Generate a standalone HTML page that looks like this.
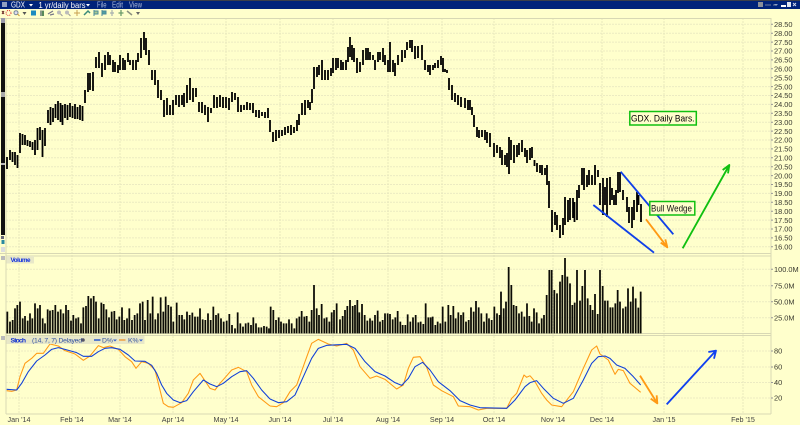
<!DOCTYPE html>
<html><head><meta charset="utf-8"><title>GDX</title>
<style>
html,body{margin:0;padding:0;background:#ffffcc;width:800px;height:425px;overflow:hidden}
svg{display:block;font-family:"Liberation Sans",sans-serif;filter:blur(.25px)}
</style></head><body>
<svg width="800" height="425" viewBox="0 0 800 425" xmlns="http://www.w3.org/2000/svg">
<rect width="800" height="425" fill="#ffffcc"/>
<!-- title bar -->
<rect width="800" height="9" fill="#00237a"/>
<rect width="800" height="1" fill="#3a3f4a"/>
<rect x="2" y="2" width="5" height="5" fill="#8fa0c0"/>
<text x="11" y="7.500" font-size="8" fill="#fff" textLength="14" lengthAdjust="spacingAndGlyphs">GDX</text>
<path d="M29 4h4l-2 2.500z" fill="#fff"/>
<text x="38.500" y="7.800" font-size="8.500" fill="#fff" textLength="47" lengthAdjust="spacingAndGlyphs">1 yr/daily bars</text>
<path d="M86 4h4l-2 2.500z" fill="#fff"/>
<text x="97" y="7.500" font-size="8" fill="#a9b8d8" textLength="9.500" lengthAdjust="spacingAndGlyphs">File</text>
<text x="112" y="7.500" font-size="8" fill="#a9b8d8" textLength="11" lengthAdjust="spacingAndGlyphs">Edit</text>
<text x="129" y="7.500" font-size="8" fill="#a9b8d8" textLength="13" lengthAdjust="spacingAndGlyphs">View</text>
<rect x="758" y="2" width="5" height="5" fill="#8a8f99"/><path d="M765 5h6M773 5h2" stroke="#6f7f9f" stroke-width="1"/>
<path d="M774 4h4l-2 2z" fill="#8fa0c0"/>
<rect x="781" y="5" width="5" height="2" fill="#fff"/><rect x="787" y="2" width="4" height="5" fill="#dfe6f2"/>
<path d="M793 3l3 3M796 3l-3 3" stroke="#cfd8ea" stroke-width="1"/>
<!-- toolbar -->
<g>
<path d="M2 11l2 3M4 11l-2 3" stroke="#622" stroke-width="1"/>
<circle cx="8.500" cy="13" r="2.500" fill="none" stroke="#d33" stroke-width="1" stroke-dasharray="1 1"/>
<circle cx="16" cy="12.700" r="2" fill="#dde" stroke="#789"/><path d="M17.500 14l2 2" stroke="#c93"/>
<path d="M22.500 12h4l-2 3z" fill="#555"/>
<rect x="31" y="10.500" width="5" height="5" fill="#1c8cc0"/>
<rect x="40" y="10.500" width="4" height="5.500" fill="#8a9a8a"/><rect x="42" y="11" width="2" height="5" fill="#5a8a5a"/>
<path d="M48 14l5-3M50 15l4-1" stroke="#778" stroke-width="1.200"/>
<circle cx="59" cy="12.500" r="2" fill="#bbb"/><path d="M60.500 14l2 2" stroke="#999"/>
<circle cx="67" cy="12.500" r="2" fill="#bbb"/><path d="M68.500 14l2 2" stroke="#999"/>
<path d="M77 10v6M74 13h6" stroke="#c9a050" stroke-width="1"/>
<path d="M84 15l4-4 2 2" stroke="#3a8a7a" stroke-width="1.500" fill="none"/>
<path d="M94 10v6M94 11h4v3h-4" stroke="#4a8a9a" fill="#a8c890" stroke-width="1"/>
<path d="M102 10v6M102 11h4v3h-4" stroke="#4a8a9a" fill="#50a0a0" stroke-width="1"/>
<path d="M112 10v6M110 13h4" stroke="#a8b0b0" stroke-width="1.200"/>
<path d="M121 10v6M118.500 13h5" stroke="#6a9a6a" stroke-width="1.300"/>
<path d="M127 11l5 4" stroke="#8a9080" stroke-width="1.500"/>
<path d="M136 12h4l-2 3z" fill="#666"/>
</g>
<!-- grid -->
<path d="M6 24.300H771M6 33.200H771M6 42.100H771M6 51H771M6 59.900H771M6 68.800H771M6 77.700H771M6 86.600H771M6 95.500H771M6 104.400H771M6 113.300H771M6 122.200H771M6 131.100H771M6 140H771M6 148.900H771M6 157.800H771M6 166.700H771M6 175.600H771M6 184.500H771M6 193.400H771M6 202.300H771M6 211.200H771M6 220.100H771M6 229H771M6 237.900H771M6 246.800H771M6 269.300H771M6 285.700H771M6 301.700H771M6 317.700H771M6 351H771M6 367H771M6 382.500H771M6 398H771" stroke="#ecebc2" stroke-width="1" stroke-dasharray="2 1" fill="none"/>
<path d="M19 18V414M72 18V414M120 18V414M173 18V414M226 18V414M280 18V414M333 18V414M388 18V414M442 18V414M494 18V414M553 18V414M602 18V414M664 18V414M743 18V414" stroke="#e8e8bc" stroke-width="1" stroke-dasharray="2 1" fill="none"/>
<!-- panel frames -->
<path d="M0 18.500H771M6 18V414M771 18V414M0 253.500H771M6 256H771M6 333.500H771M6 335.500H771M6 414H771" stroke="#d8d8b4" stroke-width="1" fill="none"/>
<!-- scrollbar -->
<rect x="1" y="18" width="4" height="217" fill="#111"/>
<rect x="1" y="18" width="4" height="5" fill="#99a"/>
<rect x="1" y="92" width="4" height="5" fill="#aaa"/>
<rect x="1" y="163" width="4" height="2" fill="#bbb"/>
<rect x="1" y="236" width="3" height="3" fill="#667"/><rect x="1.500" y="240" width="3" height="4" fill="#2a8aa0"/>
<rect x="1" y="247" width="4" height="5" fill="#ddd"/><rect x="1" y="256" width="4" height="4" fill="#bbb"/><rect x="1" y="336" width="4" height="4" fill="#bbb"/>
<!-- price bars -->
<path fill="none" stroke="#000" stroke-width="1.800" d="M7 157V169M10 150V160M12.500 152V162M15 152V165M17.500 155V168M20 133V153M22.500 134V145M25 135V145M27.500 140V146M30 141V147M32.500 142V150M35 140V155M37.500 128V150M40 127V140M42.500 130V157M45 128V146M48 110V123M50.500 107V125M53 108V122M55.500 104V118M58 101V120M60.500 103V122M62.500 105V125M65 104V118M67.500 105V120M70 103V117M72.500 106V118M75 104V119M77.500 107V119M80 105V120M82.500 106V121M85 90V103M88 73V92M90 73V90M93 72V91M96 57V68M99 52V68M102 63V77M105 55V70M108 52V65M110 55V65M113 60V72M115 62V72M118 65V73M120 55V70M123 58V70M125 60V70M128 53V62M130 60V65M133 60V70M136 60V70M138 53V62M141 38V58M144 32V50M146 38V55M149 50V65M152 70V80M155 70V85M158 80V98M161 90V100M164 100V117M167 98V115M170 105V115M173 100V115M176 95V105M179 95V107M182 95V105M184 93V107M187 85V103M190 78V100M193 88V102M196 88V97M199 102V112M202 102V113M205 105V115M208 107V122M211 108V113M214 95V108M217 97V108M220 95V107M223 97V108M226 97V108M229 98V110M232 92V102M235 93V100M238 97V112M241 105V112M244 105V110M247 102V110M250 103V110M253 103V113M256 110V117M259 110V118M262 112V116M265 112V118M268 108V118M270 120V132M273 132V142M276 130V141M279 130V138M282 130V136M285 127V135M288 126V133M291 125V135M294 127V133M297 120V131M299 114V125M302 103V115M305 100V115M308 100V108M310 102V110M312 89V103M314 67V89M317 67V77M319 65V75M322 60V80M325 70V80M328 70V80M331 68V76M333 58V73M336 58V70M338 58V68M341 60V70M343 62V70M346 60V70M348 47V62M350 37V57M352 45V60M354 48V62M357 58V73M360 62V72M363 50V65M366 48V60M368 48V60M370 52V60M373 55V60M375 60V70M378 52V62M380 52V60M383 48V62M385 55V65M388 60V72M390 42V72M393 60V72M395 63V76M398 55V65M402 50V62M405 50V58M407 42V50M410 40V48M412 40V52M415 46V59M418 46V58M422 45V60M425 60V70M428 65V72M430 65V75M433 65V70M435 63V68M438 60V68M441 56V65M443 58V72M445 69V72M447 70V73M449 78V90M452 85V100M455 93V102M458 95V105M461 97V107M465 98V108M468 100V110M470 100V110M472 107V115M474 115V127M477 127V137M479 130V138M482 130V137M485 130V140M487 132V143M490 133V147M494 143V157M497 145V153M500 147V158M502 150V165M505 155V165M507 153V167M509 137V174M511 140V160M514 145V163M517 145V157M519 143V155M522 140V152M525 148V157M527 150V163M530 148V160M532 147V158M534.500 160V166M537 163V172M540 165V173M542 165V175M545 168V175M547 165V185M549 181V208M552 210V232M555 212V225M557 215V230M560 225V238M563 218V235M565 197V225M568 200V222M570 198V220M573 198V218M574.500 202V222M577 190V220M579 185V198M582 168V185M584 168V190M587 175V187M589 170V185M592 175V185M595 165V185M598 170V177M600 183V205M603 178V215M605 187V205M607 178V217M610 177V205M612 188V200M614 195V205M616 190V205M618 172V193M620 172V192M623 190V200M627 197V212M629 207V223M632 207V228M634 200V220M637 192V212M638.500 195V205M641 204V222"/>
<!-- volume bars -->
<g fill="none" stroke="#0c0c06" stroke-width="5.300" transform="translate(0 280) scale(.33333)">
<path d="M22 160V95M30 160V125M38 160V120M45 160V85M52 160V75M60 160V65M68 160V115M75 160V108M83 160V122M90 160V100M97 160V115M105 160V70M113 160V85M120 160V75M128 160V115M135 160V130M143 160V88M150 160V92M158 160V90M166 160V75M174 160V95M182 160V88M190 160V100M198 160V75M205 160V90M213 160V122M220 160V105M228 160V115M235 160V112M243 160V130M250 160V82M258 160V78M265 160V48M273 160V55M281 160V48M288 160V65M296 160V115M304 160V68M311 160V72M319 160V88M327 160V112M335 160V95M343 160V93M350 160V118M358 160V110M366 160V82M373 160V120M381 160V115M388 160V85M396 160V120M404 160V105M412 160V100M420 160V70M428 160V65M435 160V120M443 160V60M451 160V100M458 160V50M466 160V118M474 160V100M482 160V52M490 160V95M497 160V50M505 160V75M513 160V80M520 160V125M530 160V68M538 160V105M546 160V105M553 160V118M561 160V95M569 160V105M577 160V98M585 160V110M593 160V110M600 160V85M608 160V118M616 160V120M624 160V100M632 160V120M640 160V80M648 160V105M655 160V100M663 160V115M671 160V125M680 160V122M688 160V102M696 160V135M705 160V145M713 160V97M721 160V130M729 160V140M737 160V130M745 160V128M753 160V135M760 160V112M768 160V130M776 160V142M784 160V142M792 160V138M800 160V140M807 160V145"/>
</g>
<g fill="none" stroke="#0c0c06" stroke-width="5.300" transform="translate(270 280) scale(.33333)">
<path d="M2 160V80M10 160V90M18 160V120M26 160V112M33 160V125M41 160V130M49 160V130M57 160V118M65 160V130M73 160V145M80 160V115M88 160V110M95 160V93M103 160V110M110 160V108M118 160V125M125 160V90M132 160V15M140 160V85M147 160V105M155 160V72M163 160V115M170 160V112M178 160V125M185 160V97M192 160V90M200 160V70M210 160V118M218 160V108M225 160V90M232 160V78M240 160V60M248 160V78M255 160V75M262 160V60M268 160V97M276 160V72M284 160V105M292 160V122M300 160V115M307 160V122M315 160V105M323 160V92M330 160V125M338 160V120M345 160V100M353 160V100M360 160V102M368 160V118M376 160V112M383 160V93M391 160V125M398 160V135M406 160V135M413 160V103M421 160V125M429 160V112M437 160V105M445 160V127M452 160V125M460 160V132M467 160V70M475 160V112M482 160V112M488 160V110M496 160V135M503 160V125M511 160V130M518 160V80M526 160V125M535 160V75M542 160V105M550 160V78M557 160V115M565 160V97M573 160V105M580 160V97M588 160V125M596 160V120M603 160V82M611 160V95M618 160V63M626 160V82M634 160V100M642 160V125M650 160V100M657 160V115M665 160V120M673 160V80M681 160V100M689 160V105M693 160V35M701 160V85M708 160V65M716 160V-39M724 160V15M731 160V75M739 160V78M747 160V100M755 160V95M763 160V110M771 160V70M778 160V108"/>
</g>
<g fill="none" stroke="#0c0c06" stroke-width="5.300" transform="translate(530 280) scale(.33333)">
<path d="M5 160V125M12 160V85M20 160V97M27 160V130M35 160V115M42 160V105M50 160V45M58 160V-30M65 160V-30M73 160V30M81 160V40M90 160V5M97 160V-15M105 160V-66M112 160V-10M120 160V10M127 160V75M134 160V68M141 160V-30M150 160V62M157 160V18M165 160V-30M173 160V55M181 160V75M188 160V90M195 160V42M203 160V102M210 160V-30M218 160V18M225 160V62M233 160V62M241 160V82M248 160V82M256 160V70M263 160V30M270 160V65M279 160V85M287 160V80M294 160V25M302 160V65M309 160V20M317 160V55M325 160V83M332 160V35"/>
</g>
<!-- stochastics -->
<g fill="none" stroke-width="3.200" stroke-linejoin="round" transform="translate(0 280) scale(.33333)">
<path stroke="#ff9a14" d="M20 332L35 334 50 330 60 290 75 250 95 235 110 220 130 220 150 192 175 198 195 212 225 222 250 241 270 228 295 197 310 203 330 198 355 208 375 230 395 245 408 265 425 245 445 250 465 270 475 310 490 370 505 380 520 382 545 368 565 340 580 300 600 280 610 295 630 325 645 330 660 310 675 293 695 270 715 262 740 275 755 315 775 350 810 378"/>
<path stroke="#1040d8" d="M20 328L50 330 65 310 85 275 110 243 135 225 155 208 175 203 195 208 230 218 250 229 275 229 295 215 315 205 335 203 360 208 385 225 405 243 435 244 455 256 470 280 485 315 500 340 520 360 540 368 560 362 580 335 610 300 630 312 650 320 670 310 695 290 720 275 740 272 760 295 785 330 810 357"/>
</g>
<g fill="none" stroke-width="3.200" stroke-linejoin="round" transform="translate(270 280) scale(.33333)">
<path stroke="#ff9a14" d="M0 378L20 380 40 368 60 335 80 315 105 245 125 190 145 178 175 192 200 198 230 190 250 210 270 260 300 295 320 288 345 298 380 327 400 315 415 265 430 232 450 230 470 262 490 315 515 332 550 350 565 378 600 380 625 390 650 385 710 385 725 355 740 340 762 285 770 292 780 287"/>
<path stroke="#1040d8" d="M0 357L25 368 50 365 75 345 100 290 125 235 145 205 170 196 230 193 255 205 285 245 315 275 345 288 375 308 395 316 415 295 435 260 458 247 480 270 505 305 540 332 570 362 600 375 630 383 710 385 735 360 765 320 780 308"/>
</g>
<g fill="none" stroke-width="3.200" stroke-linejoin="round" transform="translate(530 280) scale(.33333)">
<path stroke="#ff9a14" d="M0 287L15 305 35 340 50 360 65 375 95 380 130 335 160 265 185 210 200 198 210 222 235 240 255 283 265 268 280 272 300 310 332 337"/>
<path stroke="#1040d8" d="M0 308L20 302 40 325 70 355 100 370 130 355 160 300 185 250 205 230 225 228 240 235 260 255 285 265 310 290 332 315"/>
<!-- orange/blue arrows stoch -->
<path stroke="#ff9a14" stroke-width="5.500" d="M330 287L382 370M362 356L382 370 380 346"/>
<path stroke="#1040f0" stroke-width="5.500" d="M410 373L558 212M535 216L558 212 552 236"/>
</g>
<!-- wedge annotations -->
<g fill="none" stroke-linejoin="round" transform="translate(530 140) scale(.33333)">
<path stroke="#1040e8" stroke-width="5.500" d="M272 95L430 283M190 195L372 338"/>
<path stroke="#ff9a14" stroke-width="5.500" d="M348 238L412 322M392 308L412 322 406 298"/>
<path stroke="#10c010" stroke-width="5.500" d="M458 325L598 75M578 90L598 75 594 100"/>
</g>
<!-- labels -->
<rect x="629.800" y="111.500" width="66.500" height="13.500" fill="#ffffcc" stroke="#10c010" stroke-width="1.500"/>
<text x="631" y="121.500" font-size="9" fill="#000" textLength="63.500" lengthAdjust="spacingAndGlyphs">GDX. Daily Bars.</text>
<rect x="649.800" y="201.500" width="45" height="13.500" fill="#ffffcc" stroke="#10c010" stroke-width="1.500"/>
<text x="651" y="211.500" font-size="9" fill="#111" textLength="41" lengthAdjust="spacingAndGlyphs">Bull Wedge</text>
<!-- right axis -->
<path d="M771 24.300h2M771 33.200h2M771 42.100h2M771 51h2M771 59.900h2M771 68.800h2M771 77.700h2M771 86.600h2M771 95.500h2M771 104.400h2M771 113.300h2M771 122.200h2M771 131.100h2M771 140h2M771 148.900h2M771 157.800h2M771 166.700h2M771 175.600h2M771 184.500h2M771 193.400h2M771 202.300h2M771 211.200h2M771 220.100h2M771 229h2M771 237.900h2M771 246.800h2M771 269.300h2M771 285.700h2M771 301.700h2M771 317.700h2M771 351h2M771 367h2M771 382.500h2M771 398h2" stroke="#999" stroke-width="1"/>
<g font-size="7.400" fill="#3a3a30">
<text x="774" y="27">28.50</text><text x="774" y="35.900">28.00</text><text x="774" y="44.800">27.50</text><text x="774" y="53.700">27.00</text><text x="774" y="62.600">26.50</text><text x="774" y="71.500">26.00</text><text x="774" y="80.400">25.50</text><text x="774" y="89.300">25.00</text><text x="774" y="98.200">24.50</text><text x="774" y="107.100">24.00</text><text x="774" y="116">23.50</text><text x="774" y="124.900">23.00</text><text x="774" y="133.800">22.50</text><text x="774" y="142.700">22.00</text><text x="774" y="151.600">21.50</text><text x="774" y="160.500">21.00</text><text x="774" y="169.400">20.50</text><text x="774" y="178.300">20.00</text><text x="774" y="187.200">19.50</text><text x="774" y="196.100">19.00</text><text x="774" y="205">18.50</text><text x="774" y="213.900">18.00</text><text x="774" y="222.800">17.50</text><text x="774" y="231.700">17.00</text><text x="774" y="240.600">16.50</text><text x="774" y="249.500">16.00</text>
<text x="774" y="272">100.0M</text><text x="774" y="288.400">75.0M</text><text x="774" y="304.400">50.0M</text><text x="774" y="320.400">25.0M</text>
<text x="774" y="353.700">80</text><text x="774" y="369.700">60</text><text x="774" y="385.200">40</text><text x="774" y="400.700">20</text>
</g>
<!-- date axis -->
<g font-size="7.200" fill="#444" text-anchor="middle">
<text x="19" y="422">Jan '14</text><text x="72" y="422">Feb '14</text><text x="120" y="422">Mar '14</text><text x="173" y="422">Apr '14</text><text x="226" y="422">May '14</text><text x="280" y="422">Jun '14</text><text x="333" y="422">Jul '14</text><text x="388" y="422">Aug '14</text><text x="442" y="422">Sep '14</text><text x="494" y="422">Oct '14</text><text x="553" y="422">Nov '14</text><text x="602" y="422">Dec '14</text><text x="664" y="422">Jan '15</text><text x="743" y="422">Feb '15</text>
</g>
<!-- volume legend -->
<rect x="6.500" y="256" width="27.500" height="7.500" fill="#e8e8c8"/>
<text x="10.500" y="262" font-size="6.300" font-weight="bold" fill="#1030e0" textLength="20">Volume</text>
<!-- stoch legend -->
<rect x="6.500" y="336" width="138" height="8" fill="#e8e8c8"/>
<text x="10.500" y="342.500" font-size="6.800" font-weight="bold" fill="#1030d0" textLength="15.500">Stoch</text>
<text x="32" y="342.500" font-size="6.800" fill="#3050a0" textLength="50">(14, 7, 7) Delayed</text>
<circle cx="83" cy="340" r="1.800" fill="#556"/>
<path d="M94 340h6.500" stroke="#2858d0" stroke-width="1.500"/>
<text x="102" y="342.500" font-size="6.800" fill="#3050a0">D%</text>
<path d="M113 339.500h4l-2 2z" fill="#3060d0"/>
<path d="M119 340h6.500" stroke="#f0a040" stroke-width="1.500"/>
<text x="128" y="342.500" font-size="6.800" fill="#3050a0">K%</text>
<path d="M139 339.500h4l-2 2z" fill="#3060d0"/>
</svg>
</body></html>
